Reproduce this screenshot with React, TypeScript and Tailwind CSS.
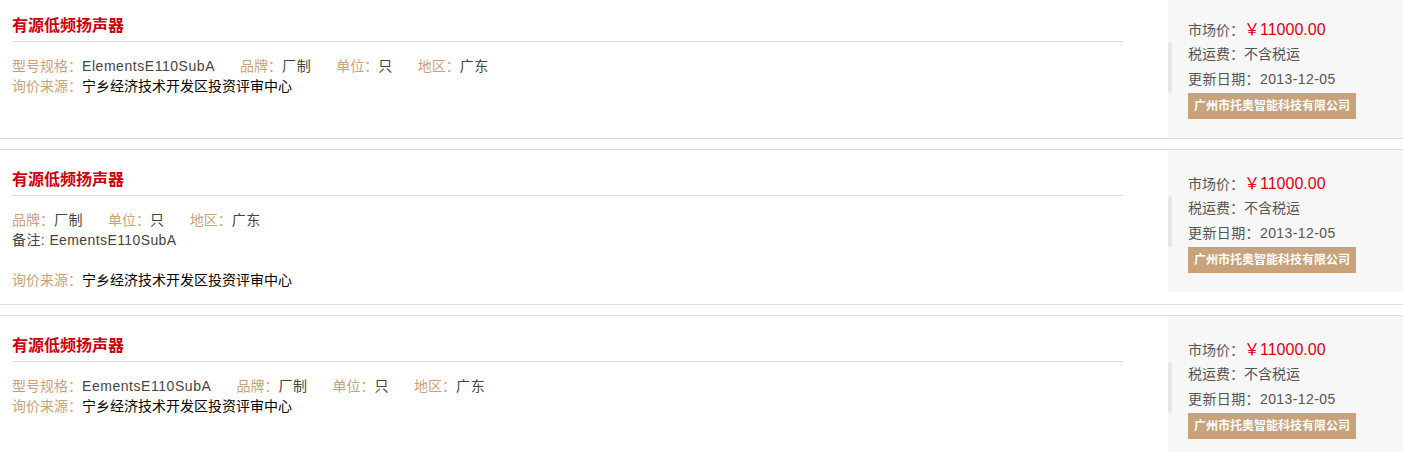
import React from "react";

type Spec = { label: string; value: string };

type Item = {
  title: string;
  specs: Spec[];
  note?: string;
  source: string;
  price: string;
  freight: string;
  date: string;
  company: string;
};

const ITEMS: Item[] = [
  {
    title: "有源低频扬声器",
    specs: [
      { label: "型号规格：", value: "ElementsE110SubA" },
      { label: "品牌：", value: "厂制" },
      { label: "单位：", value: "只" },
      { label: "地区：", value: "广东" },
    ],
    source: "宁乡经济技术开发区投资评审中心",
    price: "￥11000.00",
    freight: "不含税运",
    date: "2013-12-05",
    company: "广州市托奥智能科技有限公司",
  },
  {
    title: "有源低频扬声器",
    specs: [
      { label: "品牌：", value: "厂制" },
      { label: "单位：", value: "只" },
      { label: "地区：", value: "广东" },
    ],
    note: "备注: EementsE110SubA",
    source: "宁乡经济技术开发区投资评审中心",
    price: "￥11000.00",
    freight: "不含税运",
    date: "2013-12-05",
    company: "广州市托奥智能科技有限公司",
  },
  {
    title: "有源低频扬声器",
    specs: [
      { label: "型号规格：", value: "EementsE110SubA" },
      { label: "品牌：", value: "厂制" },
      { label: "单位：", value: "只" },
      { label: "地区：", value: "广东" },
    ],
    source: "宁乡经济技术开发区投资评审中心",
    price: "￥11000.00",
    freight: "不含税运",
    date: "2013-12-05",
    company: "广州市托奥智能科技有限公司",
  },
];

function PriceRow({ item }: { item: Item }) {
  return (
    <div className="flex items-start pt-[21px] border-y border-[#dddddd] mb-[10px]">
      {/* left: title + specs */}
      <div className="flex-1 pl-[12px] pr-[45px] pb-[14px] -mt-[21px]">
        <h3 className="pt-[18px] pb-[3px] text-[16px] leading-[24px] font-bold text-[#d0000c] border-b border-[#dddddd]">
          {item.title}
        </h3>
        <div className="mt-[14px] text-[14px] leading-[20px]">
          <div className="flex">
            {item.specs.map((s) => (
              <span key={s.label} className="mr-[25px]">
                <span className="text-[#c9a27c]">{s.label}</span>
                <span className="text-[#444444] tracking-[0.55px]">{s.value}</span>
              </span>
            ))}
          </div>
          {item.note && (
            <>
              <div className="text-[#444444] tracking-[0.4px]">{item.note}</div>
              <div className="h-[20px]" />
            </>
          )}
          <div>
            <span className="text-[#c9a27c]">询价来源：</span>
            <span className="text-black">{item.source}</span>
          </div>
        </div>
      </div>

      {/* right: price panel */}
      <div className="flex w-[235px] h-[142px] -mt-[21px] bg-[#f7f7f7]">
        <div className="w-[4px] h-[51px] mt-[46px] rounded-full bg-[#e6e6e6]" />
        <div className="ml-[16px] pt-[21px] text-[14px] leading-[25px] text-[#555555]">
          <div className="h-[25px]">
            市场价：<span className="text-[16px] text-[#e0000f]">{item.price}</span>
          </div>
          <div className="h-[25px]">税运费：{item.freight}</div>
          <div className="h-[25px] tracking-[0.4px]">更新日期：{item.date}</div>
          <div className="inline-block mt-[1px] h-[26px] px-[6px] bg-[#c8a27a] text-[12px] leading-[26px] font-bold text-white">
            {item.company}
          </div>
        </div>
      </div>
    </div>
  );
}

export default function App() {
  return (
    <div className="w-[1403px] h-[452px] overflow-hidden bg-white font-['Liberation_Sans','Noto_Sans_CJK_SC',sans-serif]">
      <div className="-mt-[5px]">
        {ITEMS.map((item, i) => (
          <PriceRow key={i} item={item} />
        ))}
      </div>
    </div>
  );
}
